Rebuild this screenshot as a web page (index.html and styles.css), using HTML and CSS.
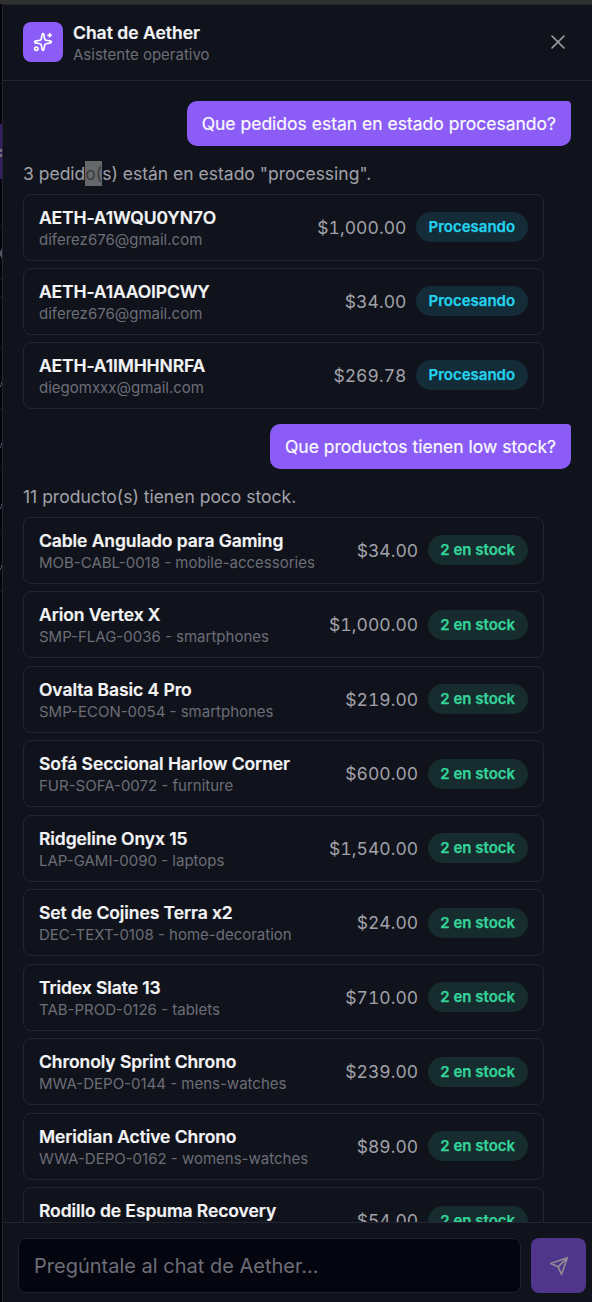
FILE: index.html
```html
<!DOCTYPE html>
<html lang="es">
<head>
<meta charset="utf-8">
<title>Chat de Aether</title>
<link rel="stylesheet" href="styles.css">
</head>
<body>
<div class="topbar"></div>
<div class="shell">
<div class="backdrop"><svg width="2" height="1298" viewBox="0 4 2 1298"><path fill="#342060" d="M0 124h2v55H0z"/><path fill="#77717f" d="M0 149h2v3H0zM0 154h2v3H0z"/><path fill="#4d5960" d="M1 249h1v9H1zM0 251h1v5H0z"/><path fill="#40535c" d="M1 382h1v3H1zM0 385h1v2H0zM1 443h1v3H1zM0 446h1v2H0zM1 504h1v3H1zM0 507h1v2H0zM1 565h1v3H1zM0 568h1v2H0z"/><path fill="#14151e" d="M0 83h2v1H0zM0 225h2v1H0zM0 279h2v1H0zM0 296h2v1H0zM0 347h2v1H0zM0 408h2v1H0zM0 469h2v1H0zM0 530h2v1H0zM0 591h2v1H0z"/></svg></div>
<main class="panel">
<header class="header">
<div class="logo"><svg width="20" height="20" viewBox="0 0 24 24" fill="none" stroke="currentColor" stroke-width="2" stroke-linecap="round" stroke-linejoin="round"><path d="M11.017 2.814a1 1 0 0 1 1.966 0l1.051 5.558a2 2 0 0 0 1.594 1.594l5.558 1.051a1 1 0 0 1 0 1.966l-5.558 1.051a2 2 0 0 0-1.594 1.594l-1.051 5.558a1 1 0 0 1-1.966 0l-1.051-5.558a2 2 0 0 0-1.594-1.594l-5.558-1.051a1 1 0 0 1 0-1.966l5.558-1.051a2 2 0 0 0 1.594-1.594z"/><path d="M20 2v4M22 4h-4"/><circle cx="4" cy="20" r="2"/></svg></div>
<div class="heading"><h1>Chat de Aether</h1><p>Asistente operativo</p></div>
<button class="close" aria-label="Cerrar"><svg width="24" height="24" viewBox="0 0 24 24" fill="none" stroke="currentColor" stroke-width="1.6" stroke-linecap="round"><path d="M18 6 6 18M6 6l12 12"/></svg></button>
</header>
<section class="messages">
<div class="bubble">Que pedidos estan en estado procesando?</div>
<div class="reply">
<p class="answer">3 pedid<span class="selected">o(</span>s) están en estado "processing".</p>
<div class="list orders">
<article class="card"><div class="info"><h2>AETH-A1WQU0YN7O</h2><p>diferez676@gmail.com</p></div><span class="price">$1,000.00</span><span class="badge processing">Procesando</span></article>
<article class="card"><div class="info"><h2>AETH-A1AAOIPCWY</h2><p>diferez676@gmail.com</p></div><span class="price">$34.00</span><span class="badge processing">Procesando</span></article>
<article class="card"><div class="info"><h2>AETH-A1IMHHNRFA</h2><p>diegomxxx@gmail.com</p></div><span class="price">$269.78</span><span class="badge processing">Procesando</span></article>
</div>
</div>
<div class="bubble">Que productos tienen low stock?</div>
<div class="reply">
<p class="answer">11 producto(s) tienen poco stock.</p>
<div class="list products">
<article class="card"><div class="info"><h2>Cable Angulado para Gaming</h2><p>MOB-CABL-0018 - mobile-accessories</p></div><span class="price">$34.00</span><span class="badge stock">2 en stock</span></article>
<article class="card"><div class="info"><h2>Arion Vertex X</h2><p>SMP-FLAG-0036 - smartphones</p></div><span class="price">$1,000.00</span><span class="badge stock">2 en stock</span></article>
<article class="card"><div class="info"><h2>Ovalta Basic 4 Pro</h2><p>SMP-ECON-0054 - smartphones</p></div><span class="price">$219.00</span><span class="badge stock">2 en stock</span></article>
<article class="card"><div class="info"><h2>Sofá Seccional Harlow Corner</h2><p>FUR-SOFA-0072 - furniture</p></div><span class="price">$600.00</span><span class="badge stock">2 en stock</span></article>
<article class="card"><div class="info"><h2>Ridgeline Onyx 15</h2><p>LAP-GAMI-0090 - laptops</p></div><span class="price">$1,540.00</span><span class="badge stock">2 en stock</span></article>
<article class="card"><div class="info"><h2>Set de Cojines Terra x2</h2><p>DEC-TEXT-0108 - home-decoration</p></div><span class="price">$24.00</span><span class="badge stock">2 en stock</span></article>
<article class="card"><div class="info"><h2>Tridex Slate 13</h2><p>TAB-PROD-0126 - tablets</p></div><span class="price">$710.00</span><span class="badge stock">2 en stock</span></article>
<article class="card"><div class="info"><h2>Chronoly Sprint Chrono</h2><p>MWA-DEPO-0144 - mens-watches</p></div><span class="price">$239.00</span><span class="badge stock">2 en stock</span></article>
<article class="card"><div class="info"><h2>Meridian Active Chrono</h2><p>WWA-DEPO-0162 - womens-watches</p></div><span class="price">$89.00</span><span class="badge stock">2 en stock</span></article>
<article class="card"><div class="info"><h2>Rodillo de Espuma Recovery</h2></div><span class="price">$54.00</span><span class="badge stock">2 en stock</span></article>
</div>
</div>
</section>
<form class="composer">
<input type="text" placeholder="Pregúntale al chat de Aether...">
<button class="send" type="button" aria-label="Enviar"><svg width="20" height="20" viewBox="0 0 24 24" fill="none" stroke="currentColor" stroke-width="2" stroke-linecap="round" stroke-linejoin="round"><path d="M22 2 15 22l-4-9-9-4zM22 2 11 13"/></svg></button>
</form>
</main>
</div>
</body>
</html>
```
FILE: styles.css
```css
* { box-sizing: border-box; }
body { margin: 0; height: 1302px; overflow: hidden; display: flex; flex-direction: column; background: #05050d; color: #f4f4f6; font-family: Inter, sans-serif; font-size: 17.5px; }
h1, h2, p { margin: 0; }
button { border: 0; padding: 0; }
svg { display: block; }
.topbar { height: 4px; flex: none; background: #303030; }
.shell { flex: 1; min-height: 0; display: flex; }
.backdrop { width: 2px; flex: none; background: #05050b; }
.panel { flex: 1; min-width: 0; display: flex; flex-direction: column; background: #10131b; border-left: 1px solid #242532; border-top: 1px solid #242532; }
.header { height: 76px; flex: none; display: flex; align-items: center; gap: 10px; padding: 0 22px 1px 20px; border-bottom: 1px solid #242532; }
.logo { width: 40px; height: 40px; display: grid; place-items: center; border-radius: 8px; background: #8b5cf6; color: #fff; }
.heading { flex: 1; padding-top: 3px; }
.heading h1 { font-size: 17.5px; line-height: 22px; font-weight: 620; -webkit-text-stroke: 0.2px #f4f4f6; }
.heading p { font-size: 15px; line-height: 22px; color: #6c6d77; }
.close { width: 24px; height: 24px; display: grid; place-items: center; background: none; color: #a1a1aa; }
.messages { flex: 1; min-height: 0; overflow: hidden; display: flex; flex-direction: column; gap: 15px; padding: 20px 21px 0 20px; }
.bubble { flex: none; align-self: flex-end; height: 45px; line-height: 46px; padding: 0 15px; border-radius: 10px 4px 10px 10px; background: #8b5cf6; color: #fafaff; -webkit-text-stroke: 0.2px #fafaff; }
.reply { flex: none; width: 521px; }
.answer { line-height: 25px; margin-bottom: 8px; color: #a1a1aa; }
.selected { background: #66676a; color: #3d3d40; padding: 2px 0; }
.list { display: flex; flex-direction: column; gap: 7.5px; }
.card { height: 67px; display: flex; align-items: center; gap: 10px; padding: 0 15px; border: 1px solid #242532; border-radius: 8px; }
.orders .card { height: 66.6px; }
.info { flex: 1; min-width: 0; height: 44px; padding-top: 1.6px; }
.info h2 { font-size: 17.5px; line-height: 22px; font-weight: 620; letter-spacing: -0.13px; -webkit-text-stroke: 0.2px #f4f4f6; }
.products .info h2 { letter-spacing: -0.08px; }
.info p { font-size: 15px; line-height: 22px; color: #6c6d77; }
.price { color: #a1a1aa; font-variant-numeric: tabular-nums; letter-spacing: 0.05px; }
.badge { height: 30px; line-height: 30px; padding: 0 12.9px 0 12.1px; border-radius: 15px; font-size: 15px; font-weight: 620; -webkit-text-stroke: 0.25px currentColor; }
.processing { background: #142b38; color: #22d3ee; }
.stock { background: #162c2e; color: #34d399; }
.composer { height: 80px; flex: none; display: flex; gap: 10px; padding: 15px 6px 0 15px; border-top: 1px solid #242532; }
.composer input { flex: 1; min-width: 0; height: 55px; padding: 0 15px; border: 1px solid #202130; border-radius: 8px; background: #05050f; font: 20px Inter, sans-serif; }
.composer input::placeholder { color: #6c6d77; opacity: 1; }
.send { width: 55px; height: 55px; display: grid; place-items: center; border-radius: 8px; background: #4f368a; color: #8d8a96; }
```
